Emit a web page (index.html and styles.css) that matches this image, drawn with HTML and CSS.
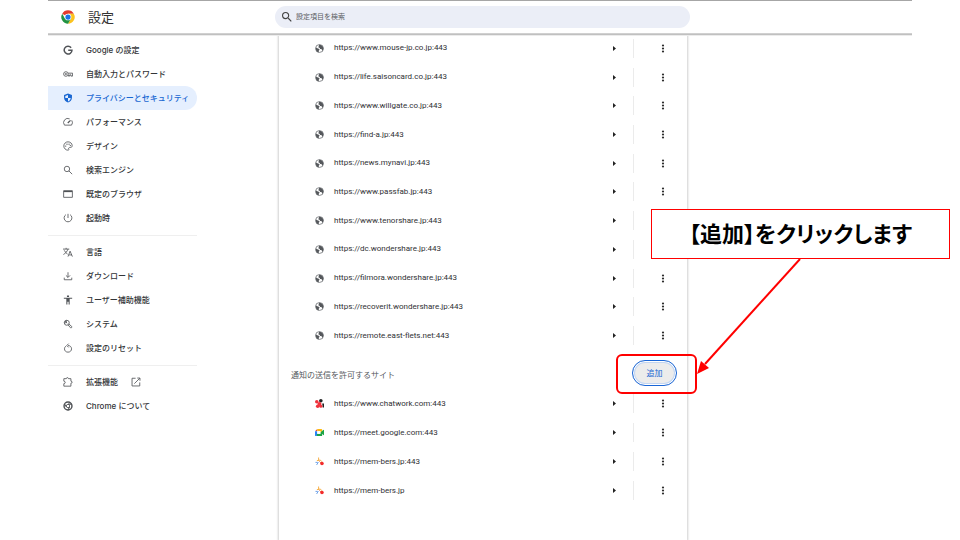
FILE: index.html
```html
<!DOCTYPE html>
<html lang="ja">
<head>
<meta charset="utf-8">
<title>設定</title>
<link rel="stylesheet" href="styles.css">
</head>
<body>
<svg class="sprite" aria-hidden="true">
  <symbol id="globe" viewBox="0 0 24 24"><circle cx="12" cy="12" r="10.500" fill="none" stroke="#66696d" stroke-width="2"/><path fill="#55585c" d="M2 9.500L8 12c3 .5 4 1.500 4 3.500 0 1.500-2 1.500-2 3v4C5 22 1 17 2 9.500zM10 2c5-1 10 2 12 7 1 3 0 6-2 9-2-1-1-4-3-5s-4 0-4-2c0-1.500-3-1-4-2.500C8 7 10.500 7 11 5.500z"/></symbol>
  <symbol id="caret" viewBox="0 0 3 5"><path fill="#222" d="M0 0l3 2.500L0 5z"/></symbol>
  <symbol id="dots" viewBox="0 0 4 9"><g fill="#2d2d2d"><circle cx="2" cy="1.500" r="1.100"/><circle cx="2" cy="4.500" r="1.100"/><circle cx="2" cy="7.500" r="1.100"/></g></symbol>
  <symbol id="members" viewBox="0 0 20 20"><g fill="none" stroke-width="2.200" stroke-linecap="round"><path stroke="#f5b04a" d="M8 2v6M5 8l6-1M12 7l3 3"/><path stroke="#6ba0e8" d="M2 12h3M7 12l-3 5"/><path stroke="#f08a6a" d="M10 10l3 3"/></g><circle cx="15.500" cy="14.500" r="4" fill="#f22a2a"/></symbol>
  <symbol id="search" viewBox="0 0 24 24"><path d="M15.500 14h-.79l-.28-.27A6.471 6.471 0 0 0 16 9.500 6.500 6.500 0 1 0 9.500 16c1.610 0 3.090-.59 4.230-1.570l.27.28v.79l5 4.990L20.490 19l-4.990-5zm-6 0C7.010 14 5 11.990 5 9.500S7.010 5 9.500 5 14 7.010 14 9.500 11.990 14 9.500 14z"/></symbol>
</svg>

<header class="topbar">
  <div class="brand">
    <svg class="logo" viewBox="0 0 48 48" aria-hidden="true"><circle cx="24" cy="24" r="23" fill="#fff"/><path fill="#e33b2e" d="M24 24L4.080 12.500a23 23 0 0 1 39.840 0H24z"/><path fill="#fcc31e" d="M24 12.500h19.920A23 23 0 0 1 24 47l10-17.200z"/><path fill="#229342" d="M4.080 12.500A23 23 0 0 0 24 47l10-17.250-20 0z"/><circle cx="24" cy="24" r="11.500" fill="#fff"/><circle cx="24" cy="24" r="9" fill="#1a73e8"/></svg>
    <h1>設定</h1>
  </div>
  <label class="search">
    <svg viewBox="3 3 18 18" aria-hidden="true"><use href="#search" width="24" height="24"/></svg>
    <input type="search" placeholder="設定項目を検索" aria-label="設定項目を検索">
  </label>
</header>

<div class="layout">
  <nav class="sidebar">
    <a href="#"><svg viewBox="0 0 24 24"><path fill="none" stroke="currentColor" stroke-width="3.600" d="M19.500 6.500A9.300 9.300 0 1 0 21.500 12.500H12.500"/></svg><span>Google の設定</span></a>
    <a href="#"><svg class="line" viewBox="0 0 24 24"><circle cx="7" cy="12" r="5.500"/><circle cx="7" cy="12" r="1.500"/><path d="M12.500 10H23v7h-4v-3h-3v3h-3v-3"/></svg><span>自動入力とパスワード</span></a>
    <a href="#" class="active"><svg viewBox="0 0 24 24"><path fill="currentColor" fill-rule="evenodd" d="M12 1L2.500 4.500V11c0 6 4 10.500 9.500 12 5.500-1.500 9.500-6 9.500-12V4.500zM12 5v7h6.500c-.5 4-3 7-6.500 8.200V12H5.500V7.200z"/></svg><span>プライバシーとセキュリティ</span></a>
    <a href="#"><svg class="line" viewBox="0 0 24 24"><path d="M16 4.500A10 10 0 0 0 3.500 19.500h17A10 10 0 0 0 21 8"/><path stroke-width="3" d="M11.500 14.500L18 8"/></svg><span>パフォーマンス</span></a>
    <a href="#"><svg class="line" viewBox="0 0 24 24"><path d="M12 2a10 10 0 1 0 0 20c2 0 2.500-1.500 2-2.500-1.500-2 0-4 2-4h2.500c2 0 3.500-1.500 3.500-4.500C22 6 17.500 2 12 2z"/><path stroke-width="3" stroke-linecap="round" d="M6.500 12h.1M9.500 7.500h.1M14.500 7.500h.1M17.500 11h.1"/></svg><span>デザイン</span></a>
    <a href="#"><svg class="line" viewBox="0 0 24 24"><circle cx="9.500" cy="9.500" r="6.500"/><path d="M14 14l8 8"/></svg><span>検索エンジン</span></a>
    <a href="#"><svg class="line" viewBox="0 0 24 24"><path d="M1.500 4h21v16h-21z"/><path stroke-width="3" d="M2 6h20"/></svg><span>既定のブラウザ</span></a>
    <a href="#"><svg class="line" viewBox="0 0 24 24"><path d="M12 2v10M7 4a9.300 9.300 0 1 0 10 0"/></svg><span>起動時</span></a>
    <hr>
    <a href="#"><svg class="line" viewBox="0 0 24 24"><path d="M0 5h15M7.500 2v3M12 5C10 11 6 15 1 18M3 8c2 4 5 7 8 9M12 23l5-13 5.500 13M14 19h7"/></svg><span>言語</span></a>
    <a href="#"><svg class="line" viewBox="0 0 24 24"><path d="M12 3v12M7 10.500l5 5 5-5M3 16v5h18v-5"/></svg><span>ダウンロード</span></a>
    <a href="#"><svg viewBox="0 0 24 24"><path fill="currentColor" d="M9.500 1h5v4h-5zM2 6.500h20V9h-6v14h-2.500v-7h-3v7H8V9H2z"/></svg><span>ユーザー補助機能</span></a>
    <a href="#"><svg class="line" viewBox="0 0 24 24"><circle cx="9" cy="9" r="6"/><path d="M5 5l5 5M12 14l6 7c2 1 4-1 3-3l-7-6M8 3v5M3 9h5"/></svg><span>システム</span></a>
    <a href="#"><svg class="line" viewBox="0 0 24 24"><path d="M12 6c5 0 8.500 3.500 8.500 8s-3.500 8-8.500 8-8.500-3.500-8.500-8c0-3 1.500-5 3.500-6.500M13.500 1.500L9 6l4.500 4.500"/></svg><span>設定のリセット</span></a>
    <hr>
    <a href="#"><svg class="line" viewBox="0 0 24 24"><path d="M2 4h6c0-3.500 5-3.500 5 0h6v6c4 0 4 5 0 5v7H2v-6c4.500 0 4.500-6 0-6z"/></svg><span>拡張機能</span><svg class="line external" viewBox="0 0 24 24"><path d="M11 3H2.500v18.500H21V13M15 2.500h6.500V9M21 3L8 16"/></svg></a>
    <a href="#"><svg class="line" viewBox="0 0 24 24"><circle cx="12" cy="12" r="9.500" stroke-width="3.500"/><circle cx="12" cy="12" r="4"/><path stroke-width="2.500" d="M12 7.500h9M8 14L3.500 7M16 14l-4.500 8"/></svg><span>Chrome について</span></a>
  </nav>

  <main class="panel">
    <ul class="sites blocked">
      <li><svg class="fav"><use href="#globe"/></svg><span>https://www.mouse-jp.co.jp:443</span><button aria-label="詳細"><svg class="caret"><use href="#caret"/></svg></button><i></i><button aria-label="その他"><svg class="dots"><use href="#dots"/></svg></button></li>
      <li><svg class="fav"><use href="#globe"/></svg><span>https://life.saisoncard.co.jp:443</span><button aria-label="詳細"><svg class="caret"><use href="#caret"/></svg></button><i></i><button aria-label="その他"><svg class="dots"><use href="#dots"/></svg></button></li>
      <li><svg class="fav"><use href="#globe"/></svg><span>https://www.willgate.co.jp:443</span><button aria-label="詳細"><svg class="caret"><use href="#caret"/></svg></button><i></i><button aria-label="その他"><svg class="dots"><use href="#dots"/></svg></button></li>
      <li><svg class="fav"><use href="#globe"/></svg><span>https://find-a.jp:443</span><button aria-label="詳細"><svg class="caret"><use href="#caret"/></svg></button><i></i><button aria-label="その他"><svg class="dots"><use href="#dots"/></svg></button></li>
      <li><svg class="fav"><use href="#globe"/></svg><span>https://news.mynavi.jp:443</span><button aria-label="詳細"><svg class="caret"><use href="#caret"/></svg></button><i></i><button aria-label="その他"><svg class="dots"><use href="#dots"/></svg></button></li>
      <li><svg class="fav"><use href="#globe"/></svg><span>https://www.passfab.jp:443</span><button aria-label="詳細"><svg class="caret"><use href="#caret"/></svg></button><i></i><button aria-label="その他"><svg class="dots"><use href="#dots"/></svg></button></li>
      <li><svg class="fav"><use href="#globe"/></svg><span>https://www.tenorshare.jp:443</span><button aria-label="詳細"><svg class="caret"><use href="#caret"/></svg></button><i></i><button aria-label="その他"><svg class="dots"><use href="#dots"/></svg></button></li>
      <li><svg class="fav"><use href="#globe"/></svg><span>https://dc.wondershare.jp:443</span><button aria-label="詳細"><svg class="caret"><use href="#caret"/></svg></button><i></i><button aria-label="その他"><svg class="dots"><use href="#dots"/></svg></button></li>
      <li><svg class="fav"><use href="#globe"/></svg><span>https://filmora.wondershare.jp:443</span><button aria-label="詳細"><svg class="caret"><use href="#caret"/></svg></button><i></i><button aria-label="その他"><svg class="dots"><use href="#dots"/></svg></button></li>
      <li><svg class="fav"><use href="#globe"/></svg><span>https://recoverit.wondershare.jp:443</span><button aria-label="詳細"><svg class="caret"><use href="#caret"/></svg></button><i></i><button aria-label="その他"><svg class="dots"><use href="#dots"/></svg></button></li>
      <li><svg class="fav"><use href="#globe"/></svg><span>https://remote.east-flets.net:443</span><button aria-label="詳細"><svg class="caret"><use href="#caret"/></svg></button><i></i><button aria-label="その他"><svg class="dots"><use href="#dots"/></svg></button></li>
    </ul>

    <div class="section-head">
      <h2>通知の送信を許可するサイト</h2>
      <div class="add-wrap"><button class="add">追加</button></div>
    </div>

    <ul class="sites">
      <li><svg class="fav" viewBox="0 0 20 20"><circle cx="13" cy="4" r="4" fill="#222"/><path fill="#222" d="M16 10h4v9h-3z"/><g fill="#f0323c"><circle cx="4" cy="6" r="4"/><circle cx="10" cy="11" r="4.500"/><circle cx="6" cy="16" r="4"/><circle cx="13" cy="16" r="3.500"/></g></svg><span>https://www.chatwork.com:443</span><button aria-label="詳細"><svg class="caret"><use href="#caret"/></svg></button><i></i><button aria-label="その他"><svg class="dots"><use href="#dots"/></svg></button></li>
      <li><svg class="fav" viewBox="0 0 20 20"><path fill="#e94235" d="M0 7l5-5v5z"/><path fill="#fdba12" d="M5 2h9a2 2 0 0 1 2 2v5l-4 2V7H5z"/><path fill="#2684fc" d="M0 7h5v6l-1 5H2a2 2 0 0 1-2-2z"/><path fill="#1ea446" d="M4 13h8v-3l7-6q1 0 1 1v10q0 1-1 1l-3-3v3a2 2 0 0 1-2 2H4z"/><path fill="#fff" d="M5 7h7v6H5z"/></svg><span>https://meet.google.com:443</span><button aria-label="詳細"><svg class="caret"><use href="#caret"/></svg></button><i></i><button aria-label="その他"><svg class="dots"><use href="#dots"/></svg></button></li>
      <li><svg class="fav"><use href="#members"/></svg><span>https://mem-bers.jp:443</span><button aria-label="詳細"><svg class="caret"><use href="#caret"/></svg></button><i></i><button aria-label="その他"><svg class="dots"><use href="#dots"/></svg></button></li>
      <li><svg class="fav"><use href="#members"/></svg><span>https://mem-bers.jp</span><button aria-label="詳細"><svg class="caret"><use href="#caret"/></svg></button><i></i><button aria-label="その他"><svg class="dots"><use href="#dots"/></svg></button></li>
    </ul>

    <p class="callout">【追加】をクリックします</p>
    <svg class="arrow" viewBox="0 0 104 115" aria-hidden="true"><path d="M103 0L8 105" stroke="#f00" stroke-width="2"/><path fill="#f00" d="M0 115L4 102 12 109z"/></svg>
  </main>
</div>
</body>
</html>
```
FILE: styles.css
```css
* { box-sizing: border-box; }

body {
  margin: 0;
  padding: 0 5%;
  min-height: 100vh;
  display: flex;
  flex-direction: column;
  background: #fff;
  color: #303134;
  font: 8px/16px Inter, "Noto Sans CJK JP", sans-serif;
}

h1, h2, p, ul { margin: 0; padding: 0; font-weight: 400; }
ul { list-style: none; }
svg { display: block; flex: none; }
.sprite { position: absolute; width: 0; height: 0; }
button { border: 0; padding: 0; background: none; font: inherit; color: inherit; }

.topbar {
  display: grid;
  grid-template-columns: 227px 1fr 222px;
  align-items: center;
  height: 34px;
  border-top: 1px solid #a6a6a6;
  border-bottom: 1px solid #d0d0d0;
  background: #fff;
  box-shadow: 0 1px 0 #c0c0c0, 0 2px 0 #ececec;
  position: relative;
  z-index: 1;
}
.brand { display: flex; align-items: center; gap: 13px; padding-left: 13px; }
.logo { width: 14px; height: 14px; }
h1 { font-size: 13px; line-height: 20px; color: #333; }

.search {
  display: flex;
  align-items: center;
  gap: 4px;
  height: 22px;
  padding: 0 7px;
  border-radius: 11px;
  background: #ebeef7;
}
.search svg { width: 10px; height: 10px; fill: #444; }
.search input {
  flex: 1;
  min-width: 0;
  border: 0;
  padding: 0;
  outline: 0;
  background: none;
  font: inherit;
  font-size: 7px;
}
.search input::placeholder { color: #5a5d62; opacity: 1; }

.layout {
  flex: 1;
  display: grid;
  grid-template-columns: 149px 1fr;
  column-gap: 82px;
  padding-right: 225px;
}

.sidebar { padding-top: 4px; font-weight: 500; }
.sidebar a {
  display: flex;
  align-items: center;
  gap: 13px;
  height: 24px;
  padding-left: 15px;
  border-radius: 0 12px 12px 0;
  color: #333538;
  text-decoration: none;
  white-space: nowrap;
}
.sidebar svg { width: 10px; height: 10px; color: #505357; }
.sidebar .active, .sidebar .active svg { color: #1967d2; }
.sidebar .active { background: #e5effe; }
.sidebar hr { margin: 5px 0 4px; border: 0; border-top: 1px solid #efefef; }
.line { fill: none; stroke: currentColor; stroke-width: 2; }

.panel {
  position: relative;
  background: #fff;
  box-shadow: 0 0 2px 1px #d0d0d0;
}
.sites { display: grid; grid-auto-rows: 29px; font-family: Roboto, sans-serif; }
.blocked { grid-auto-rows: 1fr; min-height: 316px; }
.sites li { display: flex; align-items: center; padding: 0 14px 0 36px; }
.sites span { flex: 1; padding-left: 10px; }
.sites i { width: 1px; height: 19px; margin: 0 19px 0 9px; background: #ebebeb; }
.sites button { display: flex; justify-content: center; align-items: center; width: 20px; height: 20px; }
.fav { width: 9px; height: 9px; }
.caret { width: 3px; height: 5px; }
.dots { width: 4px; height: 9px; }

.section-head {
  display: flex;
  justify-content: space-between;
  align-items: flex-end;
  padding: 10px 10px 3px 12px;
}
h2 { font-size: 8px; line-height: 22px; color: #55585c; }
.add-wrap { position: relative; }
.add-wrap::after {
  content: "";
  position: absolute;
  inset: -6px -20px -8px -16px;
  border: 2px solid #f00;
  border-radius: 6px;
  pointer-events: none;
}
.add {
  display: block;
  width: 45px;
  height: 26px;
  border: 1px solid #1a66d6;
  border-radius: 13px;
  background: #ececec;
  box-shadow: inset 0 0 0 1px #fff, inset 0 0 0 2px #c3d6f2;
  color: #1967d2;
}

.callout {
  position: absolute;
  top: 175px;
  right: -263px;
  width: 299px;
  padding-bottom: 4px;
  border: 1px solid #f00;
  background: #fff;
  color: #000;
  font: bold 22px/44px "Noto Sans CJK JP", sans-serif;
  font-feature-settings: "palt";
  text-align: center;
}
.arrow {
  position: absolute;
  top: 225px;
  right: -114px;
  width: 104px;
  height: 115px;
}
```
